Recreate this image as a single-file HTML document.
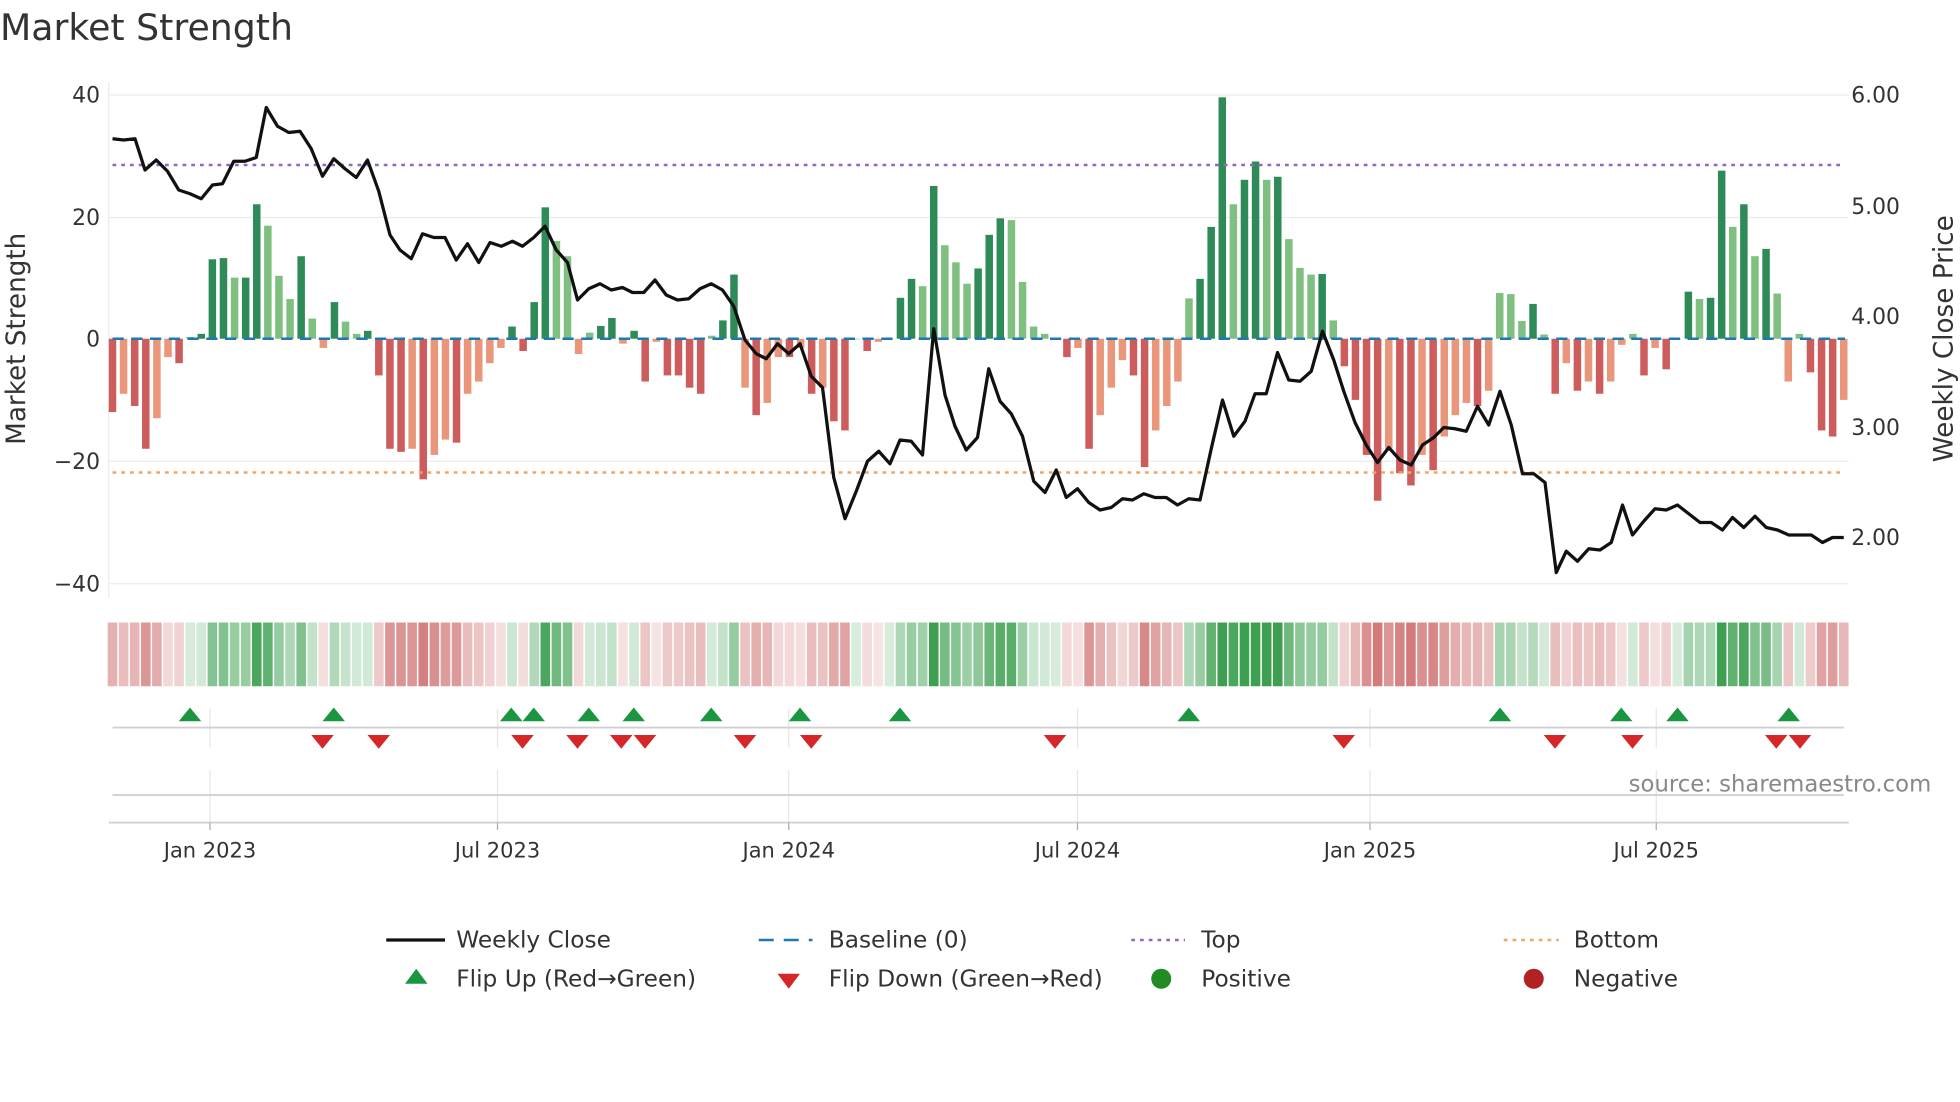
<!DOCTYPE html>
<html><head><meta charset="utf-8"><style>
html,body{margin:0;padding:0;background:#fff;}
svg{display:block;font-family:"DejaVu Sans","Liberation Sans",sans-serif;}
</style></head><body>
<svg id="s" width="1960" height="1102" viewBox="0 0 1568 881.6" xmlns="http://www.w3.org/2000/svg">
<text x="0" y="32" font-size="29" fill="#333">Market Strength</text>
<g stroke="#ececec" stroke-width="1">
<line x1="87" y1="76" x2="1479" y2="76"/><line x1="87" y1="174" x2="1479" y2="174"/>
<line x1="87" y1="369" x2="1479" y2="369"/><line x1="87" y1="467" x2="1479" y2="467"/>
<line x1="87" y1="66" x2="87" y2="478"/>
</g>
<g font-size="17.5" fill="#333" text-anchor="end">
<text x="80" y="82">40</text><text x="80" y="180">20</text><text x="80" y="277">0</text>
<text x="80" y="375">−20</text><text x="80" y="473">−40</text>
</g>
<g font-size="17.5" fill="#333">
<text x="1481" y="82">6.00</text><text x="1481" y="171">5.00</text><text x="1481" y="259">4.00</text>
<text x="1481" y="348">3.00</text><text x="1481" y="436">2.00</text>
</g>
<text transform="translate(20,271) rotate(-90)" font-size="21" fill="#333" text-anchor="middle">Market Strength</text>
<text transform="translate(1562,271) rotate(-90)" font-size="21" fill="#333" text-anchor="middle">Weekly Close Price</text>
<g id="bars"></g>
<line x1="90" y1="271" x2="1476" y2="271" stroke="#1f77b4" stroke-width="2" stroke-dasharray="9,6"/>
<line x1="90" y1="132" x2="1476" y2="132" stroke="#9467bd" stroke-width="2" stroke-dasharray="3,4"/>
<line x1="90" y1="378" x2="1476" y2="378" stroke="#f4a460" stroke-width="2" stroke-dasharray="3,4"/>
<polyline id="price" fill="none" stroke="#111" stroke-width="2.6" stroke-linejoin="round"/>
<g id="heat"></g>
<g stroke="#e6e6e6" stroke-width="1">
<line x1="168" y1="567" x2="168" y2="598"/><line x1="398" y1="567" x2="398" y2="598"/><line x1="631" y1="567" x2="631" y2="598"/><line x1="862" y1="567" x2="862" y2="598"/><line x1="1096" y1="567" x2="1096" y2="598"/><line x1="1325" y1="567" x2="1325" y2="598"/>
<line x1="168" y1="616" x2="168" y2="658"/><line x1="398" y1="616" x2="398" y2="658"/><line x1="631" y1="616" x2="631" y2="658"/><line x1="862" y1="616" x2="862" y2="658"/><line x1="1096" y1="616" x2="1096" y2="658"/><line x1="1325" y1="616" x2="1325" y2="658"/>
</g>
<line x1="90" y1="582" x2="1475" y2="582" stroke="#d0d0d0" stroke-width="1.5"/>
<line x1="90" y1="636" x2="1475" y2="636" stroke="#d0d0d0" stroke-width="1.5"/>
<line x1="87" y1="658" x2="1479" y2="658" stroke="#d0d0d0" stroke-width="1.5"/>
<g id="flips"></g>
<g stroke="#aaa" stroke-width="1"><line x1="168" y1="658" x2="168" y2="664"/><line x1="398" y1="658" x2="398" y2="664"/><line x1="631" y1="658" x2="631" y2="664"/><line x1="862" y1="658" x2="862" y2="664"/><line x1="1096" y1="658" x2="1096" y2="664"/><line x1="1325" y1="658" x2="1325" y2="664"/></g>
<g font-size="16.8" fill="#333" text-anchor="middle">
<text x="168" y="686">Jan 2023</text><text x="398" y="686">Jul 2023</text><text x="631" y="686">Jan 2024</text>
<text x="862" y="686">Jul 2024</text><text x="1096" y="686">Jan 2025</text><text x="1325" y="686">Jul 2025</text>
</g>
<text x="1545" y="633" font-size="18.2" fill="#888" text-anchor="end">source: sharemaestro.com</text>
<g font-size="18.6" fill="#333">
<line x1="309" y1="752" x2="356" y2="752" stroke="#111" stroke-width="2.6"/><text x="365" y="758">Weekly Close</text>
<line x1="607" y1="752" x2="650" y2="752" stroke="#1f77b4" stroke-width="2" stroke-dasharray="12,8"/><text x="663" y="758">Baseline (0)</text>
<line x1="905" y1="752" x2="948" y2="752" stroke="#9467bd" stroke-width="2" stroke-dasharray="3,4"/><text x="961" y="758">Top</text>
<line x1="1203" y1="752" x2="1247" y2="752" stroke="#f4a460" stroke-width="2" stroke-dasharray="3,4"/><text x="1259" y="758">Bottom</text>
<polygon points="333,775 324,787 342,787" fill="#1a9641"/><text x="365" y="789">Flip Up (Red→Green)</text>
<polygon points="622,779 640,779 631,791" fill="#d62728"/><text x="663" y="789">Flip Down (Green→Red)</text>
<circle cx="929" cy="783" r="8" fill="#228b22"/><text x="961" y="789">Positive</text>
<circle cx="1227" cy="783" r="8" fill="#b22222"/><text x="1259" y="789">Negative</text>
</g>
</svg>
<script>
var NS="http://www.w3.org/2000/svg";
function el(t,a,p){var e=document.createElementNS(NS,t);for(var k in a)e.setAttribute(k,a[k]);p.appendChild(e);return e;}
var v=[-12,-9,-11,-18,-13,-3,-4,0.3,0.8,13,13.2,10,10,22,18.5,10.3,6.5,13.5,3.3,-1.5,6,2.8,0.8,1.3,-6,-18,-18.5,-18,-23,-19,-16.5,-17,-9,-7,-4,-1.5,2,-2,6,21.5,16,13.5,-2.5,1,2.1,3.4,-0.8,1.3,-7,-0.5,-6,-6,-8,-9,0.5,3,10.5,-8,-12.5,-10.5,-3,-3,-1.5,-9,-8,-13.5,-15,0,-2,-0.5,0,6.7,9.8,8.6,25,15.3,12.5,9,11.5,17,19.7,19.4,9.3,2,0.8,0,-3,-1.5,-18,-12.5,-8,-3.5,-6,-21,-15,-11,-7,6.6,9.8,18.3,39.5,22,26,29,26,26.5,16.3,11.6,10.5,10.6,3,-4.5,-10,-19,-26.5,-18,-22,-24,-19,-21.5,-16,-12.5,-10.5,-11,-8.5,7.5,7.3,2.9,5.7,0.7,-9,-4,-8.5,-7,-9,-7,-1,0.8,-6,-1.5,-5,0,7.7,6.5,6.7,27.5,18.3,22,13.5,14.7,7.4,-7,0.8,-5.5,-15,-16,-10];
var n=v.length,x0=90,x1=1475,dx=(x1-x0)/(n-1);
var B=document.getElementById('bars'),H=document.getElementById('heat');
for(var i=0;i<n;i++){var x=x0+i*dx,val=v[i],h=Math.abs(val)*4.89;
var prev=i?v[i-1]:0;var strong=Math.abs(val)>=Math.abs(prev);
var c=val>=0?(strong?'#2e8b57':'#7fbf7f'):(strong?'#cd5c5c':'#e9967a');
el('rect',{x:x-3,y:val>=0?271-h:271,width:6,height:Math.max(h,0.5),fill:c},B);
var a=Math.min(1,0.2+Math.abs(val)/30);
var hc=val>=0?'rgba(60,160,80,'+a.toFixed(2)+')':'rgba(200,90,90,'+(a*0.8).toFixed(2)+')';
el('rect',{x:x-dx/2+0.6,y:498,width:dx-1.2,height:51,fill:hc},H);}
var p=[90,111,99,112,108,111,116,136,125,128,134,137,143,152,152,155,161,159,170,148,178,147,187,129,196,129,205,126,213,86,222,101,231,106,240,105,249,119,258,141,267,127,276,135,285,142,294,128,303,153,312,188,320,200,329,207,338,187,347,190,356,190,365,208,374,195,383,210,392,194,401,197,410,193,418,197,427,190,436,181,445,200,454,210,462,240,471,231,480,227,489,232,498,230,506,234,515,234,524,224,533,236,542,240,551,239,560,231,569,227,578,232,587,245,596,272,605,283,613,287,622,275,631,283,640,275,649,301,658,310,667,382,676,415,685,393,694,369,703,361,712,371,720,352,729,353,738,364,747,263,756,316,764,341,773,360,782,350,791,295,800,321,809,331,818,349,827,385,836,394,845,376,853,398,862,391,871,402,880,408,889,406,898,399,906,400,915,395,924,398,933,398,942,404,951,399,960,400,969,359,978,320,987,349,996,337,1004,315,1013,315,1022,282,1031,304,1040,305,1049,297,1058,265,1067,288,1075,313,1084,338,1093,356,1102,370,1111,358,1120,368,1129,372,1138,356,1147,350,1155,342,1164,343,1173,345,1182,325,1191,340,1200,313,1209,340,1218,379,1227,379,1236,386,1245,458,1253,441,1262,449,1271,439,1280,440,1289,434,1298,404,1306,428,1315,417,1324,407,1333,408,1342,404,1351,411,1360,418,1369,418,1378,424,1386,414,1395,422,1404,413,1413,422,1422,424,1431,428,1440,428,1449,428,1458,434,1466,430,1475,430];
var s='';for(var j=0;j<p.length;j+=2)s+=p[j]+','+p[j+1]+' ';document.getElementById('price').setAttribute('points',s);
var F=document.getElementById('flips');
[152,267,409,427,471,507,569,640,720,951,1200,1297,1342,1431].forEach(function(x){el('polygon',{points:x+',566 '+(x-9)+',577 '+(x+9)+',577',fill:'#1a9641'},F);});
[258,303,418,462,497,516,596,649,844,1075,1244,1306,1421,1440].forEach(function(x){el('polygon',{points:(x-9)+',588 '+(x+9)+',588 '+x+',599',fill:'#d62728'},F);});
</script>
</body></html>
